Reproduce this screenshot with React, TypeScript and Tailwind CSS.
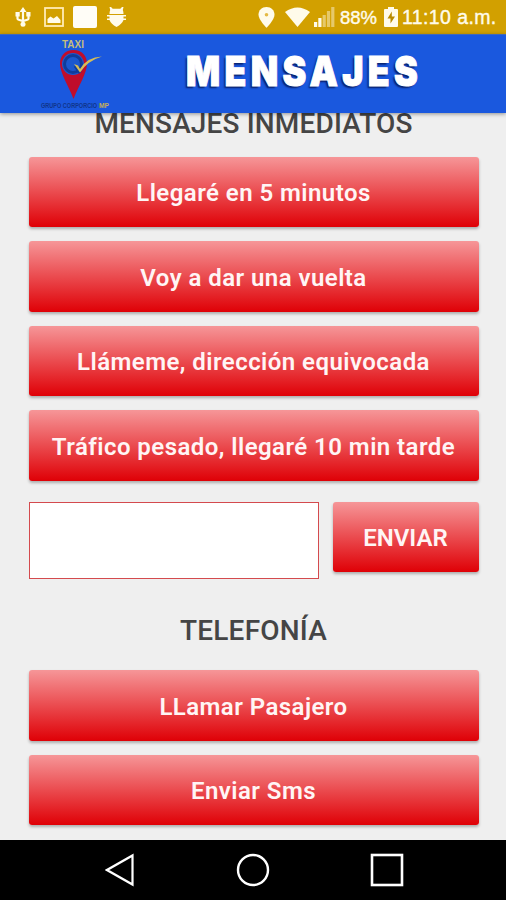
import { ReactNode } from "react";

const quickMessages = [
  "Llegaré en 5 minutos",
  "Voy a dar una vuelta",
  "Llámeme, dirección equivocada",
  "Tráfico pesado, llegaré 10 min tarde",
];

const phoneActions = ["LLamar Pasajero", "Enviar Sms"];

interface RedButtonProps {
  children: ReactNode;
  className?: string;
}

function RedButton({ children, className = "w-full tracking-[0.45px]" }: RedButtonProps) {
  return (
    <button
      className={`${className} h-[70.5px] shrink-0 rounded-[3px] bg-linear-to-b/srgb from-[#f69698] to-[#df0006] pt-[3px] font-[Roboto,sans-serif] text-[24px] font-semibold whitespace-nowrap text-[#fff5f5] shadow-[0_2px_3px_rgba(0,0,0,0.28)]`}
    >
      {children}
    </button>
  );
}

function StatusBar() {
  return (
    <div className="flex h-[34px] shrink-0 items-center justify-between bg-[#d2a000] pr-[9px] pl-[15px] text-[#fffbea]">
      <div className="flex items-center">
        {/* usb */}
        <svg width="16" height="20" viewBox="0 0 16 20" fill="none" stroke="currentColor" strokeWidth="2.2">
          <path d="M8 3v14M2.5 7v4.5q0 1 1.2 1.3L8 14l4.3-1.2q1.2-.3 1.2-1.3V7" />
          <path d="M8 0l3.5 5h-7zM.5 5h4.2v4.5H.5zM11.300 5h4.200v4.500h-4.200z" fill="currentColor" stroke="none" />
          <circle cx="8" cy="17.3" r="2.5" fill="currentColor" stroke="none" />
        </svg>
        {/* gallery */}
        <svg className="ml-[13px]" width="20" height="20" viewBox="0 0 20 20">
          <rect x="1" y="1" width="18" height="18" fill="none" stroke="#ffebb5" strokeWidth="1.8" />
          <path d="M3.5 16v-4l3-2.5 3 2 3.5-2.5 3.5 4v3z" fill="currentColor" />
        </svg>
        <span className="ml-[9px] h-[22px] w-[24px] rounded-[2px] bg-[#fffdf7]" />
        {/* debug bug */}
        <svg className="ml-[10px]" width="19" height="20" viewBox="0 0 19 20" fill="currentColor">
          <path d="M2.500 0H4l1.700 1.800h7.600L15 0h1.500l-.7 3q.7 1.400.7 4h-14q0-2.600.7-4z" />
          <path d="M0 8h19v1.500h-2.500v2H19v1.500h-2.500q-1.500 4.200-7 7-5.500-2.800-7-7H0v-1.500h2.500v-2H0z" />
        </svg>
      </div>
      <div className="flex items-center">
        {/* location */}
        <svg width="17" height="21" viewBox="0 0 17 21">
          <path d="M8.500 0C3.800 0 .5 3.300.5 7.800c0 5 8 13 8 13s8-8 8-13C16.500 3.300 13.200 0 8.500 0z" fill="currentColor" />
          <circle cx="8.500" cy="7.800" r="1.800" fill="#e4ba45" />
        </svg>
        <svg className="ml-[10px]" width="25" height="20" viewBox="0 0 25 20">
          <path d="M0 5Q12.500-4 25 5L12.500 20z" fill="currentColor" />
        </svg>
        <svg className="ml-[4px]" width="21" height="20" viewBox="0 0 21 20" fill="currentColor">
          <path d="M0 15h3.200v5H0zM4.300 11h3.200v9H4.300z" />
          <path d="M8.600 8h3.200v12H8.600zM12.900 4h3.200v16h-3.200zM17.200 0h3.200v20h-3.200z" opacity=".45" />
        </svg>
        <span className="ml-[5px] w-[37px] pt-[2px] font-['Liberation_Sans',sans-serif] text-[18.500px] whitespace-nowrap [-webkit-text-stroke:0.4px]">
          88%
        </span>
        <svg className="ml-[7px]" width="14" height="20" viewBox="0 0 14 20">
          <path d="M4 0h6v2h3q1 0 1 1v16q0 1-1 1H1q-1 0-1-1V3q0-1 1-1h3z" fill="currentColor" />
          <path d="M7.800 4.500L3.500 11.500h3v5l4.500-7H7.800z" fill="#b98b00" />
        </svg>
        <span className="ml-[4px] w-[95px] pt-[2px] font-['Liberation_Sans',sans-serif] text-[19.500px] tracking-[0.4px] whitespace-nowrap [-webkit-text-stroke:0.4px]">
          11:10 a.m.
        </span>
      </div>
    </div>
  );
}

function TaxiLogo() {
  return (
    <svg className="ml-[38px]" width="76" height="76" viewBox="0 0 76 76" fontFamily="Liberation Sans, sans-serif">
      <text x="24" y="12" fontSize="10" fontWeight="700" fill="#c5bd7d" textLength="22" lengthAdjust="spacingAndGlyphs">
        TAXI
      </text>
      <path d="M35.500 14C27 14 22 20 22 27.500c0 10 8.500 22 13.500 35.500C40.500 49.500 49 37.500 49 27.500 49 20 44 14 35.500 14z" fill="#c00d2b" />
      <circle cx="35" cy="28" r="11" fill="#1b58cf" />
      <circle cx="35" cy="28" r="8.500" fill="none" stroke="#103c9b" strokeWidth="3" />
      <path d="M37 30l5 7" stroke="#103c9b" strokeWidth="3" />
      <path d="M36 28l4 1.500 2 3.500Q49 21 64 20.500 50 24.500 42 36.500z" fill="#d6bd57" />
      <text x="3" y="72" fontSize="6.500" fontWeight="700" fill="#10358c" textLength="56" lengthAdjust="spacingAndGlyphs">
        GRUPO CORPORCIO
      </text>
      <text x="61" y="72" fontSize="6.500" fontWeight="700" fill="#c4ad57" textLength="10" lengthAdjust="spacingAndGlyphs">
        MP
      </text>
    </svg>
  );
}

function Header() {
  return (
    <header className="z-10 flex h-[79px] shrink-0 items-center border-t border-[#4169b5] bg-[#1a58de] shadow-[0_1px_4px_rgba(0,0,0,0.4)]">
      <TaxiLogo />
      <h1 className="ml-[72px] origin-left scale-x-[0.87] pb-[5px] font-[Inter,sans-serif] text-[41px] leading-none font-black tracking-[5px] text-white [-webkit-text-stroke:1px_white] [text-shadow:-2px_2px_2px_#071d66]">
        MENSAJES
      </h1>
    </header>
  );
}

function NavBar() {
  return (
    <nav className="flex h-[60px] shrink-0 items-center bg-black pl-[105px]">
      <svg width="30" height="34" viewBox="0 0 30 34" fill="none" stroke="#fff" strokeWidth="2.200">
        <path d="M27.500 2.500v29L2 17z" />
      </svg>
      <svg className="ml-[101px]" width="34" height="34" viewBox="0 0 34 34" fill="none" stroke="#fff" strokeWidth="2.400">
        <circle cx="17" cy="17" r="15" />
      </svg>
      <svg className="ml-[100px]" width="34" height="34" viewBox="0 0 34 34" fill="none" stroke="#fff" strokeWidth="2.600">
        <rect x="2" y="2" width="30" height="30" />
      </svg>
    </nav>
  );
}

export default function App() {
  return (
    <div className="flex h-[900px] w-[506px] flex-col overflow-hidden bg-[#efefef]">
      <StatusBar />
      <Header />
      <main className="flex min-h-0 flex-1 flex-col pr-[27.500px] pl-[28.500px]">
        <h2 className="-mt-[5px] h-[32px] shrink-0 text-center font-[Roboto,sans-serif] text-[28px] leading-[32px] font-medium tracking-[0.15px] whitespace-nowrap text-[#454545]">
          MENSAJES INMEDIATOS
        </h2>
        <div className="mt-[16.500px] flex flex-col gap-[14px]">
          {quickMessages.map((message) => (
            <RedButton key={message}>{message}</RedButton>
          ))}
        </div>
        <div className="mt-[21px] flex items-start justify-between">
          <input className="h-[77px] w-[290px] border border-[#d44a4e] bg-white px-2 text-2xl outline-none" />
          <RedButton className="w-[146px]">ENVIAR</RedButton>
        </div>
        <h2 className="mt-[36px] h-[32px] shrink-0 text-center font-[Roboto,sans-serif] text-[28px] leading-[32px] font-medium tracking-[0.2px] text-[#454545]">
          TELEFONÍA
        </h2>
        <div className="mt-[23.500px] flex flex-col gap-[14px]">
          {phoneActions.map((action) => (
            <RedButton key={action}>{action}</RedButton>
          ))}
        </div>
      </main>
      <NavBar />
    </div>
  );
}
